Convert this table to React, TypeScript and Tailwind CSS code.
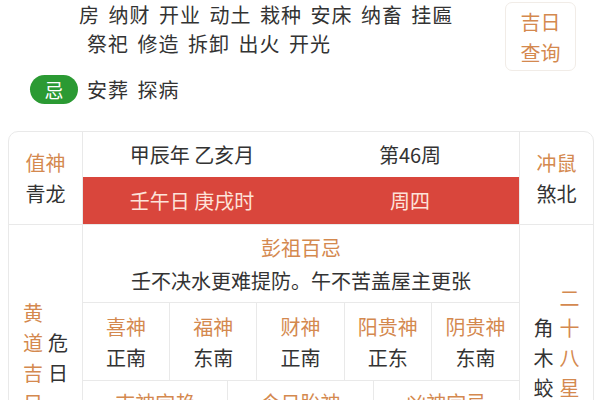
import React from "react";

const OR = "text-[#d4894f]";

function VCol({ chars, cls }: { chars: string; cls: string }) {
  return (
    <div className={`flex flex-col w-[20px] items-center ${cls}`}>
      {chars.split("").map((c, i) => (
        <span key={i} className="leading-[30px]">{c}</span>
      ))}
    </div>
  );
}

export default function App() {
  const five = [
    ["喜神", "正南"],
    ["福神", "东南"],
    ["财神", "正南"],
    ["阳贵神", "正东"],
    ["阴贵神", "东南"],
  ];
  const three = ["吉神宜趋", "今日胎神", "凶神宜忌"];
  return (
    <div className="w-[600px] h-[400px] overflow-hidden bg-white text-[#333] font-['Noto_Sans_CJK_SC',sans-serif] text-[20px]">
      <div className="flex h-[131px]">
        <div className="flex-1 pl-[87px] flex flex-col">
          <div className="-ml-[8px] leading-[29px] tracking-[1px] [word-spacing:3px] whitespace-nowrap">
            房 纳财 开业 动土 栽种 安床 纳畜 挂匾
          </div>
          <div className="leading-[29px] tracking-[1px] [word-spacing:3px] whitespace-nowrap">
            祭祀 修造 拆卸 出火 开光
          </div>
          <div className="flex items-center mt-[17px] -ml-[57px] gap-[9px]">
            <div className="w-[48px] h-[29px] rounded-full bg-[#2b9a33] text-white flex items-center justify-center text-[19px] leading-none">
              忌
            </div>
            <div className="leading-[29px] tracking-[1px] [word-spacing:3px] whitespace-nowrap">安葬 探病</div>
          </div>
        </div>
        <div className={`mr-[24px] mt-[2px] w-[71px] h-[69px] border border-[#f1ece7] rounded-[7px] flex flex-col items-center justify-center ${OR}`}>
          <span className="leading-[31px]">吉日</span>
          <span className="leading-[31px]">查询</span>
        </div>
      </div>

      <div className="ml-[8px] w-[586px] border border-[#e9e9e9] rounded-t-[10px]">
        {/* row 1 */}
        <div className="flex h-[93px] border-b border-[#e9e9e9]">
          <div className="w-[74px] border-r border-[#e9e9e9] flex flex-col items-center justify-center">
            <span className={`leading-[31px] ${OR}`}>值神</span>
            <span className="leading-[31px]">青龙</span>
          </div>
          <div className="flex-1 flex flex-col">
            <div className="h-[45px] grid grid-cols-2">
              <div className="flex items-center justify-center">甲辰年 乙亥月</div>
              <div className="flex items-center justify-center">第46周</div>
            </div>
            <div className="h-[47px] grid grid-cols-2 bg-[#d9463c] text-[#fde3da]">
              <div className="flex items-center justify-center">壬午日 庚戌时</div>
              <div className="flex items-center justify-center">周四</div>
            </div>
          </div>
          <div className="w-[74px] border-l border-[#e9e9e9] flex flex-col items-center justify-center">
            <span className={`leading-[31px] ${OR}`}>冲鼠</span>
            <span className="leading-[31px]">煞北</span>
          </div>
        </div>
        {/* row 2 */}
        <div className="flex h-[266px]">
          <div className="w-[74px] border-r border-[#e9e9e9] flex items-center justify-center gap-[5px]">
            <VCol chars="黄道吉日" cls={OR} />
            <VCol chars="危日" cls="" />
          </div>
          <div className="flex-1 flex flex-col">
            <div className="h-[78px] border-b border-[#e9e9e9] flex flex-col items-center pt-[6px]">
              <span className={`leading-[33px] ${OR}`}>彭祖百忌</span>
              <span className="leading-[33px] whitespace-nowrap">壬不决水更难提防。午不苦盖屋主更张</span>
            </div>
            <div className="h-[78px] border-b border-[#e9e9e9] grid grid-cols-5">
              {five.map(([a, b], i) => (
                <div key={i} className={`flex flex-col items-center justify-center ${i < 4 ? "border-r border-[#e9e9e9]" : ""}`}>
                  <span className={`leading-[31px] ${OR}`}>{a}</span>
                  <span className="leading-[31px]">{b}</span>
                </div>
              ))}
            </div>
            <div className="flex-1 grid grid-cols-3">
              {three.map((a, i) => (
                <div key={i} className={`flex flex-col items-center pt-[6px] ${i < 2 ? "border-r border-[#e9e9e9]" : ""}`}>
                  <span className={`leading-[31px] ${OR}`}>{a}</span>
                </div>
              ))}
            </div>
          </div>
          <div className="w-[74px] border-l border-[#e9e9e9] flex items-center justify-center gap-[6px]">
            <VCol chars="角木蛟" cls="" />
            <VCol chars="二十八星宿" cls={OR} />
          </div>
        </div>
      </div>
    </div>
  );
}
